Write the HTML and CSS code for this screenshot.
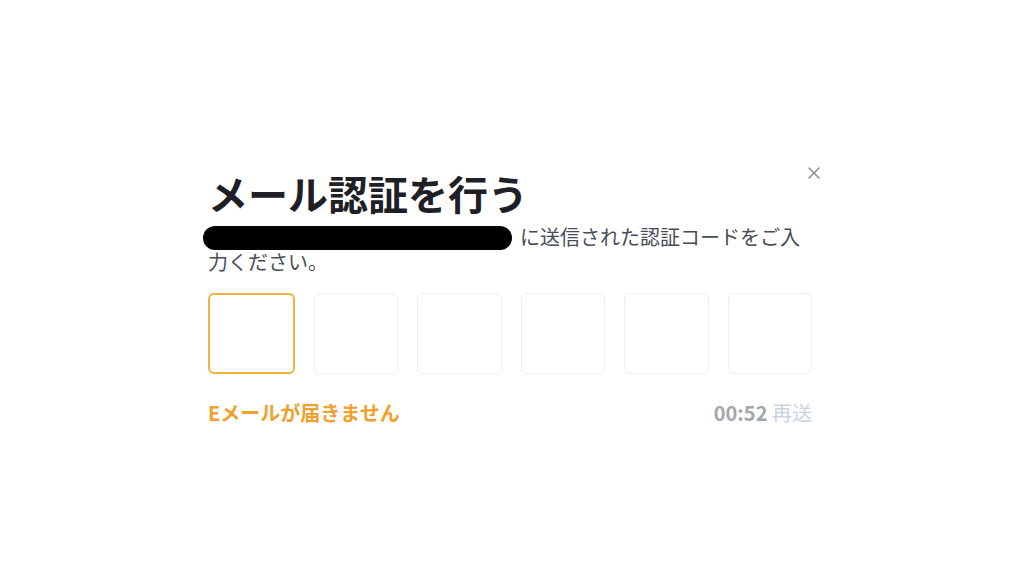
FILE: index.html
```html
<!DOCTYPE html>
<html lang="ja">
<head>
  <meta charset="UTF-8">
  <title>メール認証を行う</title>
  <meta name="viewport" content="width=device-width, initial-scale=1.0">
  <link rel="stylesheet" href="styles.css">
</head>
<body>

  <div class="dialog">
    <button class="close" aria-label="閉じる">
      <svg width="12" height="12" viewBox="0 0 12 12">
        <path d="M1 1L11 11M11 1L1 11" stroke="#8f8f8f" stroke-width="1.6" stroke-linecap="round"/>
      </svg>
    </button>

    <h1 class="title">メール認証を行う</h1>
    <p class="desc"><span class="redacted"></span>に送信された認証コードをご入力ください。</p>

    <div class="code-row">
      <input maxlength="1" class="code-input active">
      <input maxlength="1" class="code-input">
      <input maxlength="1" class="code-input">
      <input maxlength="1" class="code-input">
      <input maxlength="1" class="code-input">
      <input maxlength="1" class="code-input">
    </div>

    <div class="links">
      <a class="no-mail">Eメールが届きません</a>
      <div class="resend">
        <span class="timer">00:52</span>
        <span class="resend-btn">再送</span>
      </div>
    </div>
  </div>

</body>
</html>
```

FILE: styles.css
```css
body {
  font-family: "Noto Sans CJK JP", "Noto Sans", sans-serif;
  background: #ffffff;
  margin: 0;
  padding: 0;
}

.dialog {
  position: relative;
  width: 604px;
  margin: 169px 0 0 208px;
}

.close {
  position: absolute;
  top: -2px;
  right: -8px;
  width: 12px;
  height: 12px;
  padding: 0;
  border: none;
  background: none;
  cursor: pointer;
}

.close svg {
  display: block;
}

.title {
  margin: 0;
  font-size: 40px;
  line-height: 48px;
  font-weight: 700;
  color: #1e2026;
}

.desc {
  margin: 8px 0 0;
  font-size: 20px;
  line-height: 24px;
  color: #474d57;
}

.redacted {
  display: inline-block;
  vertical-align: top;
  width: 309px;
  height: 24px;
  margin: 1px 8px 0 -5px;
  background: #000000;
  border-radius: 12px;
}

.code-row {
  display: flex;
  gap: 19px;
  margin-top: 19px;
}

.code-input {
  flex: 1;
  min-width: 0;
  height: 81px;
  box-sizing: border-box;
  border: 1px solid #eeeeee;
  border-radius: 6px;
  outline: none;
  text-align: center;
  font-size: 28px;
}

.code-input.active {
  border: 2px solid #eeb43c;
}

.links {
  display: flex;
  justify-content: space-between;
  margin-top: 27px;
  font-size: 20px;
  line-height: 24px;
  font-weight: 700;
}

.no-mail {
  color: #f0a12e;
  cursor: pointer;
}

.timer {
  color: #a3a6ab;
}

.resend-btn {
  color: #ccd3de;
  font-weight: 400;
}
```
